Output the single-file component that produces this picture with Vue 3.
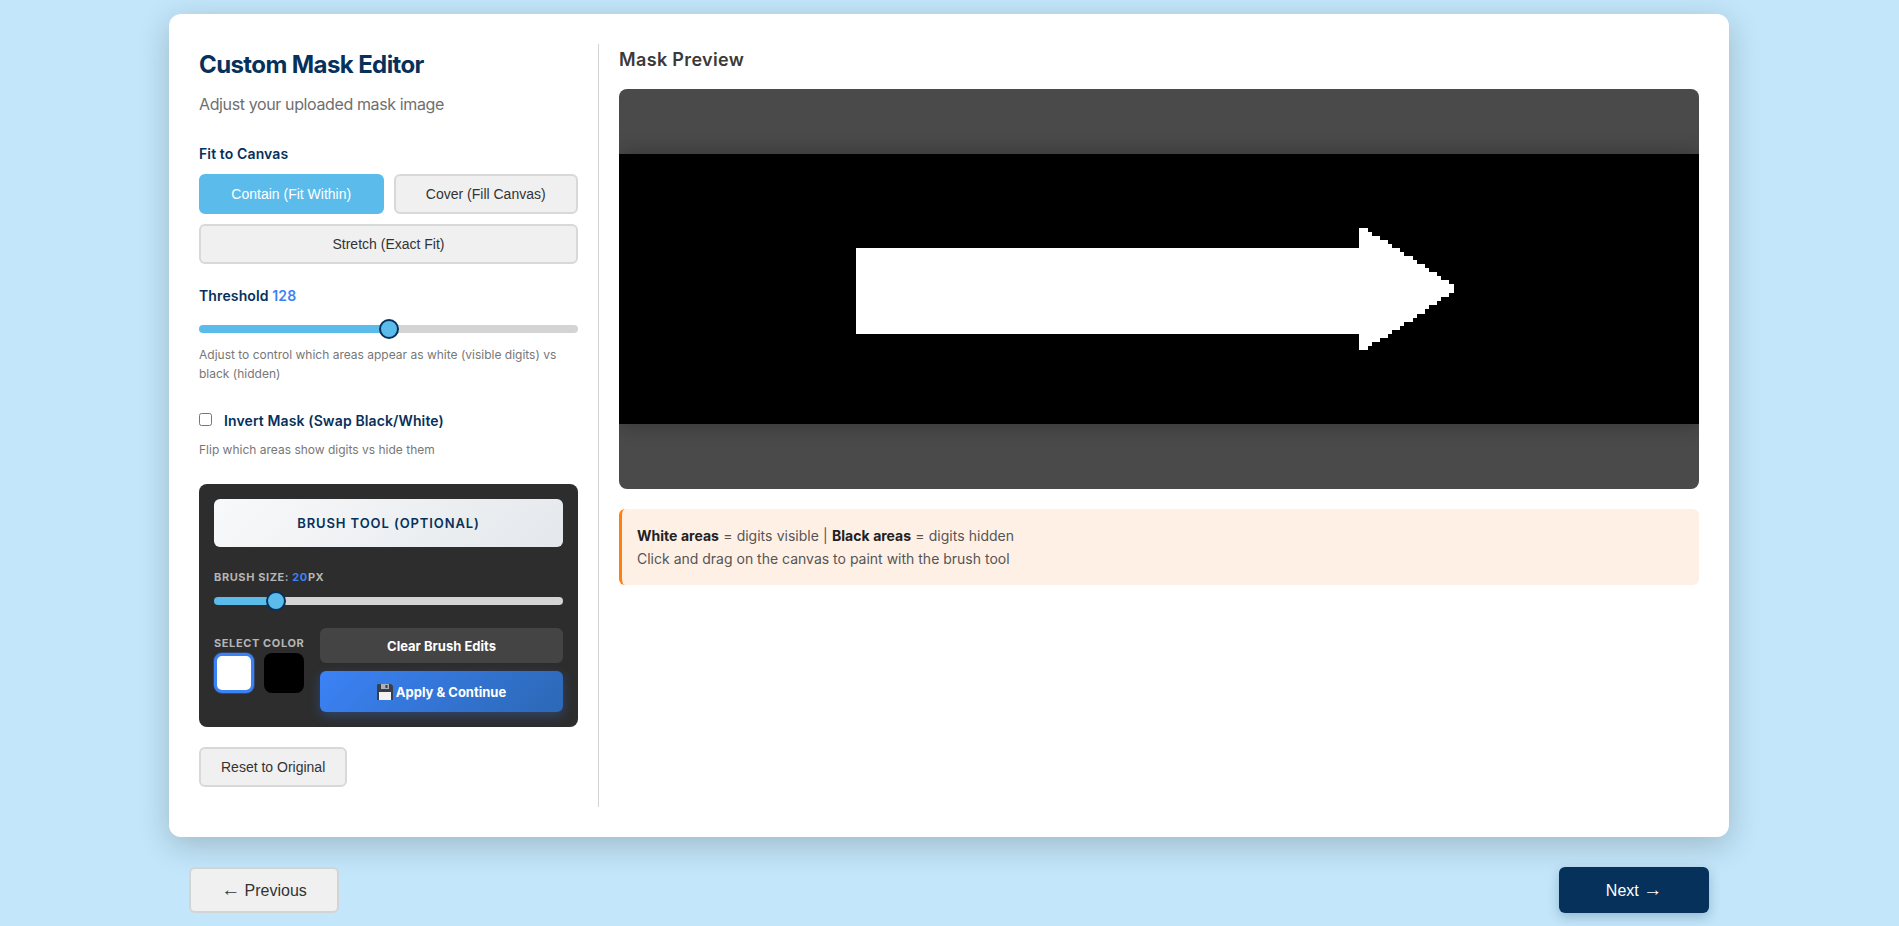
<script setup>
import { ref, computed } from 'vue'

const fitMode = ref('contain')
const threshold = ref(128)
const invert = ref(false)
const brushSize = ref(20)
const brushColor = ref('white')

const fitOptions = [
  { id: 'contain', label: 'Contain (Fit Within)' },
  { id: 'cover', label: 'Cover (Fill Canvas)' },
  { id: 'stretch', label: 'Stretch (Exact Fit)' }
]

// stair-stepped outline of the uploaded mask, in canvas pixels
const arrow = '237,94 740,94 740,74 749,74 749,78 753,78 753,82 761,82 761,86 769,86 769,90 773,90 773,94 781,94 781,98 785,98 785,102 794,102 794,106 798,106 798,110 806,110 806,114 810,114 810,118 818,118 818,122 822,122 822,126 830,126 830,130 835,130 835,139 830,139 830,143 822,143 822,147 818,147 818,151 810,151 810,155 806,155 806,160 798,160 798,164 794,164 794,168 785,168 785,172 781,172 781,176 773,176 773,180 769,180 769,184 761,184 761,188 753,188 753,192 749,192 749,196 740,196 740,180 237,180'

function sliderFill(value, min, max, width) {
  const pos = 10 + ((value - min) / (max - min)) * (width - 20)
  return { background: `linear-gradient(to right, #5bbbea ${pos}px, #d4d4d4 ${pos}px)` }
}

const thresholdStyle = computed(() => sliderFill(threshold.value, 0, 255, 379))
const brushStyle = computed(() => sliderFill(brushSize.value, 5, 100, 349))
</script>

<template>
  <div class="page">
    <main class="card">
      <aside class="sidebar">
        <h1>Custom Mask Editor</h1>
        <p class="subtitle">Adjust your uploaded mask image</p>

        <div class="label fit-label">Fit to Canvas</div>
        <div class="fit-grid">
          <button
            v-for="o in fitOptions"
            :key="o.id"
            class="btn"
            :class="{ active: fitMode === o.id, wide: o.id === 'stretch' }"
            @click="fitMode = o.id"
          >{{ o.label }}</button>
        </div>

        <div class="label threshold-label">Threshold <span class="value">{{ threshold }}</span></div>
        <input v-model.number="threshold" class="range threshold-range" type="range" min="0" max="255" :style="thresholdStyle">
        <p class="hint threshold-hint">Adjust to control which areas appear as white (visible digits) vs black (hidden)</p>

        <label class="invert">
          <input v-model="invert" type="checkbox">
          <span class="label">Invert Mask (Swap Black/White)</span>
        </label>
        <p class="hint flip-hint">Flip which areas show digits vs hide them</p>

        <section class="brush-panel">
          <div class="brush-head">BRUSH TOOL (OPTIONAL)</div>
          <div class="mini-label size-label">BRUSH SIZE: <span class="value">{{ brushSize }}</span>PX</div>
          <input v-model.number="brushSize" class="range brush-range" type="range" min="5" max="100" :style="brushStyle">
          <div class="brush-row">
            <div class="colors">
              <div class="mini-label">SELECT COLOR</div>
              <div class="swatches">
                <button class="swatch white" :class="{ selected: brushColor === 'white' }" @click="brushColor = 'white'"></button>
                <button class="swatch black" :class="{ selected: brushColor === 'black' }" @click="brushColor = 'black'"></button>
              </div>
            </div>
            <div class="brush-actions">
              <button class="clear-btn">Clear Brush Edits</button>
              <button class="apply-btn">
                <svg class="disk" viewBox="0 0 16 16" width="16" height="16">
                  <path d="M1 0h13l2 2v14H0V1z" fill="#3a3f47" />
                  <rect x="4" y="0" width="8" height="5" fill="#aab2bd" />
                  <rect x="8.5" y="1" width="2" height="3" fill="#3a3f47" />
                  <rect x="2" y="8" width="12" height="8" fill="#f1f3f5" />
                </svg>
                Apply &amp; Continue
              </button>
            </div>
          </div>
        </section>

        <button class="btn reset">Reset to Original</button>
      </aside>

      <section class="preview">
        <h2>Mask Preview</h2>
        <div class="canvas">
          <svg class="mask" viewBox="0 0 1080 270" width="1080" height="270" shape-rendering="crispEdges">
            <rect width="1080" height="270" fill="#000" />
            <polygon :points="arrow" fill="#fff" />
          </svg>
        </div>
        <div class="info">
          <div class="info-first"><strong>White areas</strong> = digits visible | <strong>Black areas</strong> = digits hidden</div>
          <div>Click and drag on the canvas to paint with the brush tool</div>
        </div>
      </section>
    </main>

    <nav class="nav">
      <button class="nav-btn prev"><span class="arrow">←</span> Previous</button>
      <button class="nav-btn next">Next <span class="arrow">→</span></button>
    </nav>
  </div>
</template>

<style>
body {
  margin: 0;
  background: #c3e6fa;
}
</style>

<style scoped>
.page {
  width: 1561px;
  height: 926px;
  margin: 0 auto;
  padding: 14px 1px 0 0;
  box-sizing: border-box;
  font-family: Inter, "Liberation Sans", sans-serif;
}

.card {
  display: flex;
  gap: 20px;
  padding: 30px;
  background: #fff;
  border-radius: 12px;
  box-shadow: 0 8px 32px rgba(0, 0, 0, 0.2);
}

.sidebar {
  width: 400px;
  flex: none;
  box-sizing: border-box;
  padding-right: 20px;
  padding-bottom: 20px;
  border-right: 1px solid #d4d4d4;
}

h1 {
  margin: 2px 0 0;
  font-size: 24px;
  line-height: 38px;
  font-weight: 700;
  letter-spacing: -0.6px;
  color: #06315b;
}

.subtitle {
  margin: 8px 0 0;
  font-size: 16px;
  line-height: 24px;
  letter-spacing: -0.38px;
  color: #6f6f6f;
}

.label {
  font-size: 14px;
  line-height: 20px;
  font-weight: 600;
  letter-spacing: 0.12px;
  color: #06315b;
}

.value {
  color: #3b82f6;
}

.fit-label {
  margin-top: 28px;
}

.fit-grid {
  display: grid;
  grid-template-columns: 1fr 1fr;
  gap: 10px;
  margin-top: 10px;
}

.btn {
  height: 40px;
  padding: 0 20px;
  border: 2px solid #d8d8d8;
  border-radius: 6px;
  background: #f0f0f0;
  color: #333;
  font-family: "Liberation Sans", sans-serif;
  font-size: 14px;
  cursor: pointer;
}

.btn.active {
  border-color: #5bbbea;
  background: #5bbbea;
  color: #fff;
}

.btn.wide {
  grid-column: 1 / 3;
}

.threshold-label {
  margin-top: 22px;
}

.range {
  display: block;
  appearance: none;
  -webkit-appearance: none;
  width: 100%;
  height: 8px;
  border-radius: 4px;
  outline: none;
  cursor: pointer;
}

.range::-webkit-slider-thumb {
  -webkit-appearance: none;
  width: 20px;
  height: 20px;
  box-sizing: border-box;
  border: 2px solid #06315b;
  border-radius: 50%;
  background: #5bbbea;
}

.threshold-range {
  margin: 19px 0 0;
}

.hint {
  margin: 0;
  font-size: 12px;
  line-height: 19px;
  color: #777;
}

.threshold-hint {
  margin-top: 12px;
}

.invert {
  display: flex;
  align-items: center;
  gap: 12px;
  margin-top: 28px;
  cursor: pointer;
}

.invert input {
  width: 13px;
  height: 13px;
  margin: 0 0 3px;
}

.flip-hint {
  margin-top: 9px;
}

.brush-panel {
  margin-top: 25px;
  padding: 15px;
  border-radius: 8px;
  background: #2d2d2d;
}

.brush-head {
  height: 48px;
  border-radius: 6px;
  background: linear-gradient(135deg, #f8f9fa, #e4e8ec);
  color: #06315b;
  font-size: 13px;
  font-weight: 600;
  letter-spacing: 0.9px;
  line-height: 48px;
  text-align: center;
}

.mini-label {
  font-size: 11px;
  line-height: 14px;
  font-weight: 700;
  letter-spacing: 0.6px;
  color: #b5b5b5;
  white-space: nowrap;
}

.size-label {
  margin-top: 23px;
}

.brush-range {
  margin: 13px 0 0;
}

.brush-row {
  display: flex;
  gap: 16px;
  margin-top: 23px;
}

.colors {
  flex: none;
  width: 90px;
  padding-top: 8px;
}

.swatches {
  display: flex;
  gap: 10px;
  margin-top: 3px;
}

.swatch {
  width: 40px;
  height: 40px;
  padding: 0;
  border: none;
  border-radius: 8px;
  cursor: pointer;
}

.swatch.white {
  background: #fff;
}

.swatch.black {
  background: #000;
}

.swatch.selected {
  border: 3px solid #3b82f6;
  box-shadow: 0 0 0 1px rgba(59, 130, 246, 0.3);
}

.brush-actions {
  flex: 1;
  display: flex;
  flex-direction: column;
  gap: 8px;
}

.clear-btn,
.apply-btn {
  border: none;
  border-radius: 6px;
  color: #fff;
  font-family: Inter, sans-serif;
  font-size: 13px;
  font-weight: 700;
  cursor: pointer;
}

.clear-btn {
  height: 35px;
  background: #444;
}

.apply-btn {
  display: flex;
  align-items: center;
  justify-content: center;
  gap: 3px;
  height: 41px;
  background: linear-gradient(135deg, #3b82f6, #2c68b5);
  box-shadow: 0 4px 12px rgba(59, 130, 246, 0.3);
}

.reset {
  margin-top: 20px;
}

.preview {
  flex: 1;
  min-width: 0;
}

h2 {
  margin: 0 0 13px;
  font-size: 18px;
  line-height: 32px;
  font-weight: 600;
  letter-spacing: 0.35px;
  color: #3a3a3a;
}

.canvas {
  display: flex;
  align-items: center;
  height: 400px;
  border-radius: 8px;
  background: #4a4a4a;
  overflow: hidden;
}

.mask {
  display: block;
  box-shadow: 0 0 20px rgba(0, 0, 0, 0.3);
}

.info {
  margin-top: 20px;
  padding: 15px;
  border-left: 3px solid #ff7f11;
  border-radius: 6px;
  background: #fff0e6;
  color: #555;
  font-size: 14px;
  line-height: 23px;
}

.info-first {
  word-spacing: 0.3px;
}

.info strong {
  color: #222;
}

.nav {
  display: flex;
  justify-content: space-between;
  margin-top: 30px;
  padding: 0 20px;
}

.nav-btn {
  width: 150px;
  height: 46px;
  border-radius: 6px;
  font-family: "Liberation Sans", sans-serif;
  font-size: 16px;
  cursor: pointer;
}

.arrow {
  font-size: 19px;
  line-height: 1;
}

.prev {
  border: 2px solid #d4d4d4;
  background: #f0f0f0;
  color: #333;
}

.next {
  border: none;
  background: #06315b;
  color: #fff;
  box-shadow: 0 4px 12px rgba(6, 49, 91, 0.25);
}
</style>
